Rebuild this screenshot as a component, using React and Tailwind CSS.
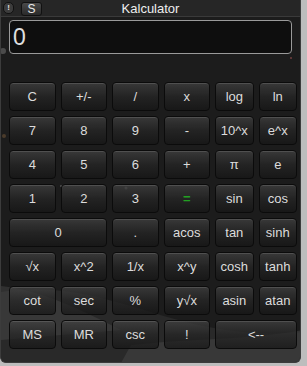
import React from 'react';

// rows of the keypad; span marks keys that take two columns
const rows = [
  [['C'], ['+/-'], ['/'], ['x'], ['log'], ['ln']],
  [['7'], ['8'], ['9'], ['-'], ['10^x'], ['e^x']],
  [['4'], ['5'], ['6'], ['+'], ['π'], ['e']],
  [['1'], ['2'], ['3'], ['=', 'eq'], ['sin'], ['cos']],
  [['0', 'wide'], ['.'], ['acos'], ['tan'], ['sinh']],
  [['√x'], ['x^2'], ['1/x'], ['x^y'], ['cosh'], ['tanh']],
  [['cot'], ['sec'], ['%'], ['y√x'], ['asin'], ['atan']],
  [['MS'], ['MR'], ['csc'], ['!'], ['<--', 'wide']],
];

function Key({ label, kind }) {
  return <button className={keyClass(kind)}>{label}</button>;
}

function keyClass(kind) {
  const base =
    'h-[29px] rounded-[4px] border border-[#0b0b0b] bg-gradient-to-b from-[rgba(66,66,66,0.75)] via-[rgba(38,38,38,0.72)] to-[rgba(22,22,22,0.72)] shadow-[inset_0_1px_0_rgba(255,255,255,0.12)] text-[13px] leading-none flex items-center justify-center';
  if (kind === 'wide') return base + ' col-span-2 text-[#dcdcdc]';
  if (kind === 'eq') return base + ' text-[#22a022] font-bold';
  return base + ' text-[#dcdcdc]';
}

export default function App() {
  return (
    <div
      className="w-[307px] h-[366px] bg-[#bdbdbd] overflow-hidden"
      style={{ fontFamily: '"Liberation Sans", Arial, sans-serif' }}
    >
      <div className="relative w-[301px] h-[363px] bg-[#1c1c1c] rounded-bl-[6px] rounded-br-[6px] border-l border-b border-r border-[#3c3c3c] overflow-hidden">
        {/* wallpaper behind the keys */}
        <svg className="absolute left-0 top-0" width="301" height="363" viewBox="0 0 301 363">
          <circle cx="2" cy="51" r="3" fill="#6a6a6a" opacity="0.6" />
          <circle cx="3" cy="136" r="2" fill="#7a5a3a" opacity="0.5" />
          <circle cx="60" cy="186" r="1" fill="#888" opacity="0.5" />
          <circle cx="125" cy="188" r="1.5" fill="#888" opacity="0.5" />
          <circle cx="110" cy="45" r="1" fill="#aa5555" opacity="0.6" />
          <circle cx="290" cy="58" r="1" fill="#aa5555" opacity="0.6" />
          <path d="M0 292 C 60 282, 110 300, 170 318 C 220 332, 260 336, 301 332 L301 363 L0 363 Z" fill="#353535" opacity="0.5" />
          <path d="M0 286 C 40 290, 80 310, 120 330 L 0 340 Z" fill="#505050" opacity="0.4" />
          <path d="M130 345 C 190 338, 250 340, 301 330 L301 363 L120 363 Z" fill="#454545" opacity="0.55" />
        </svg>

        <div className="relative flex flex-col">
          {/* title bar */}
          <div className="h-[17px] bg-[#262626] border-b border-[#3a3a3a] relative flex items-center">
            <div className="absolute left-[2px] top-[2px] w-[11px] h-[12px] rounded-[5px] bg-[#3c3c3c] border border-[#111] text-[8px] text-[#ddd] flex items-center justify-center leading-none font-bold">
              !
            </div>
            <div className="absolute left-[20px] top-[2px] w-[21px] h-[14px] rounded-[3px] bg-gradient-to-b from-[#4a4a4a] to-[#2a2a2a] border border-[#111] text-[12px] text-[#e8e8e8] flex items-center justify-center leading-none">
              S
            </div>
            <div className="w-full text-center text-[13px] text-[#eeeeee] leading-none">Kalculator</div>
          </div>

          {/* display */}
          <div className="mx-[8px] mt-[3px] h-[34px] rounded-[4px] border border-[#9a9a9a] bg-[#0e0e0e] flex items-center pl-[3px]">
            <span className="text-[23px] text-[#e0e0e0] leading-none">0</span>
          </div>

          {/* keypad */}
          <div className="mt-[28px] ml-[8px] w-[288px] grid grid-cols-[46fr_46fr_46fr_46fr_38fr_38fr] gap-x-[5px] gap-y-[5px]">
            {rows.map((row, i) =>
              row.map(([label, kind]) => <Key key={i + label} label={label} kind={kind} />)
            )}
          </div>
        </div>
      </div>
    </div>
  );
}
